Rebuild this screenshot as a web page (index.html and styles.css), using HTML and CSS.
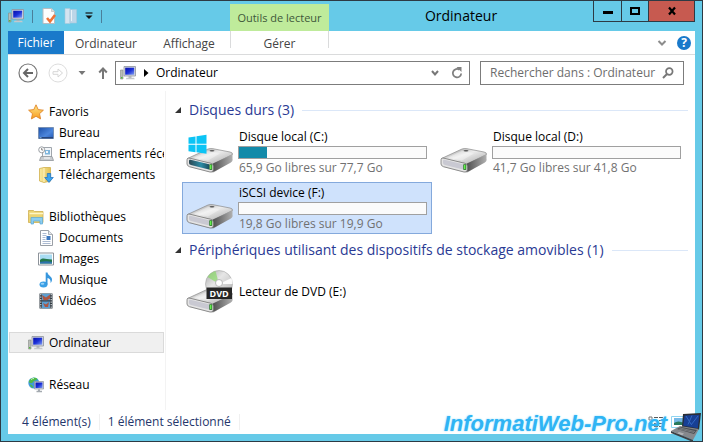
FILE: index.html
```html
<!DOCTYPE html>
<html lang="fr">
<head>
  <meta charset="UTF-8" />
  <meta name="viewport" content="width=device-width, initial-scale=1.0"/>
  <title>Ordinateur</title>
  <link rel="stylesheet" href="styles.css">
</head>
<body>

  <svg class="sprite" aria-hidden="true">
    <defs>
      <linearGradient id="screen" x1="0" y1="0" x2="1" y2="1">
        <stop offset="0" stop-color="#0a10a8"/>
        <stop offset="0.5" stop-color="#1a2fd8"/>
        <stop offset="1" stop-color="#7f9cf0"/>
      </linearGradient>
      <linearGradient id="desk" x1="0" y1="0" x2="1" y2="1">
        <stop offset="0" stop-color="#1c4fa8"/>
        <stop offset="0.6" stop-color="#4c86dc"/>
        <stop offset="1" stop-color="#2459b4"/>
      </linearGradient>
      <linearGradient id="gold" x1="0" y1="0" x2="0" y2="1">
        <stop offset="0" stop-color="#ffe88a"/>
        <stop offset="1" stop-color="#f79a1c"/>
      </linearGradient>
      <linearGradient id="folder" x1="0" y1="0" x2="1" y2="0">
        <stop offset="0" stop-color="#f9eaa0"/>
        <stop offset="1" stop-color="#e2c255"/>
      </linearGradient>
      <linearGradient id="diskTop" x1="0" y1="0" x2="1" y2="1">
        <stop offset="0" stop-color="#8a8a8a"/>
        <stop offset="0.45" stop-color="#ececec"/>
        <stop offset="1" stop-color="#a8a8a8"/>
      </linearGradient>
      <linearGradient id="diskSide" x1="0" y1="0" x2="1" y2="0">
        <stop offset="0" stop-color="#4c4c4c"/>
        <stop offset="1" stop-color="#b0b0b0"/>
      </linearGradient>
      <linearGradient id="teal" x1="0" y1="0" x2="1" y2="0">
        <stop offset="0" stop-color="#2c4752"/>
        <stop offset="0.6" stop-color="#2b8ca6"/>
        <stop offset="1" stop-color="#1d4f60"/>
      </linearGradient>
      <linearGradient id="disc" x1="0" y1="0" x2="1" y2="1">
        <stop offset="0" stop-color="#a8a8a8"/>
        <stop offset="0.4" stop-color="#e6e6e6"/>
        <stop offset="1" stop-color="#b0b0b0"/>
      </linearGradient>
    </defs>

    <symbol id="i-computer" viewBox="0 0 16 16">
      <path d="M0.5 5h2.500v9h-2.500z" fill="#b9bdb9" stroke="#858a85" stroke-width="0.600"/>
      <path d="M1 12h1.500v1.500H1z" fill="#55b83d"/>
      <path d="M4 1.500h11.500v9.500H4z" fill="#d6dae2" stroke="#8d929c" stroke-width="0.800"/>
      <path d="M5.200 2.700h9v7h-9z" fill="url(#screen)"/>
      <path d="M8.500 11.300h3v1.500h-3z" fill="#a4a8ac"/>
      <path d="M6.500 12.700h7.500l0.800 1.500H5.800z" fill="#c4c8cc"/>
    </symbol>

    <symbol id="i-star" viewBox="0 0 16 16">
      <path d="M8 0.800l2.200 4.800 5.200.6-3.900 3.500 1.100 5.200L8 12.300l-4.600 2.600 1.100-5.200L.6 6.200l5.200-.6z" fill="url(#gold)" stroke="#e0862a" stroke-width="0.900" stroke-linejoin="round"/>
    </symbol>

    <symbol id="i-desktop" viewBox="0 0 16 16">
      <path d="M.5 2.500h15v11H.5z" fill="url(#desk)" stroke="#7790b4"/>
      <path d="M1 12h14v1.500H1z" fill="#26457c"/>
      <path d="M1.500 12.300h2v.9h-2z" fill="#8fc6f2"/>
    </symbol>

    <symbol id="i-recent" viewBox="0 0 16 16">
      <path d="M4.500 1.500h9v10h-9z" fill="#f3f6f9" stroke="#a0a6ac"/>
      <path d="M7 4h5v4.500H7z" fill="#7fb6dd"/>
      <path d="M8 5h2v2H8z" fill="#f3f6f9"/>
      <path d="M3 10.500h11l1.500 4h-14z" fill="#c8ccd0" stroke="#90959a" stroke-width="0.800"/>
      <path d="M6 12h6" stroke="#fff"/>
      <circle cx="3.700" cy="3.800" r="3" fill="#fff" stroke="#9a9fa4"/>
      <path d="M3.700 2v2h1.500" fill="none" stroke="#666" stroke-width="0.800"/>
    </symbol>

    <symbol id="i-download" viewBox="0 0 16 16">
      <path d="M1.500 1.500L6 .5h6.500v13.500L6 15.500 1.500 14z" fill="url(#folder)" stroke="#d0b04c" stroke-width="0.800"/>
      <path d="M6 1v14" stroke="#fff6c8"/>
      <path d="M9.300 6.500h3.400v4h2.600L11 15.500 6.700 10.500h2.600z" fill="#3ba4ee" stroke="#1b6fc0" stroke-width="0.700"/>
    </symbol>

    <symbol id="i-library" viewBox="0 0 16 16">
      <path d="M.5 3.500v-2h5l1 1h8.500v11H.5z" fill="#ecd473" stroke="#cfae4e" stroke-width="0.800"/>
      <path d="M1.500 4.500h13.500" stroke="#fff5c4" stroke-width="1.500"/>
      <path d="M3 8.500h11.500V15h-2.500v-3H5.500v3H3z" fill="#8ccdf0" stroke="#5aa7d6" stroke-width="0.700"/>
    </symbol>

    <symbol id="i-document" viewBox="0 0 16 16">
      <path d="M2.500.5h8l4 4v11h-12z" fill="#fff" stroke="#9a9fa6"/>
      <path d="M10.500.5v4h4" fill="#e3e6ea" stroke="#9a9fa6" stroke-width="0.800"/>
      <path d="M4.500 3.500h4M4.500 5.500h4M4.500 7.500h3M4.500 9.500h3M4.500 11.500h8M4.500 13.500h8" stroke="#97aac6" stroke-width="0.800"/>
      <path d="M8.500 6h4v4h-4z" fill="#3c78c0"/>
    </symbol>

    <symbol id="i-image" viewBox="0 0 16 16">
      <path d="M.5 2h15v12H.5z" fill="#fff" stroke="#8d939a"/>
      <path d="M2 3.500h12v9H2z" fill="#a9dcf3"/>
      <path d="M2 9c3-3 5-1 12-.5v4H2z" fill="#24784c"/>
      <path d="M2 11c4-1 8-1 12 0v1.500H2z" fill="#2e72ae"/>
    </symbol>

    <symbol id="i-music" viewBox="0 0 16 16">
      <ellipse cx="5.500" cy="12.500" rx="4" ry="3" fill="#3ba0e6"/>
      <path d="M7.700.5h1.800c.2 3 5 4 4.500 7.500-.2 1.700-1 2.500-1.500 3 .6-3-1-4.500-3-5v6.500H7.700z" fill="#3797de"/>
      <ellipse cx="4.500" cy="11.700" rx="1.800" ry="1" fill="#9bd2f7"/>
    </symbol>

    <symbol id="i-video" viewBox="0 0 16 16">
      <path d="M1.500.5h13v15h-13z" fill="#333c44"/>
      <path d="M4 .800h8v6.500H4zM4 8.500h8v6.700H4z" fill="#5c9ed0"/>
      <path d="M4 2l4 2.500L12 1.500v4L9 7.200H5.500zM5 10l3 1.500 3-2.500-1 5H7z" fill="#ad5541"/>
      <path d="M2.800 1v14M13.200 1v14" stroke="#e6eaee" stroke-dasharray="1.300 1.200" stroke-width="1.100"/>
    </symbol>

    <symbol id="i-network" viewBox="0 0 16 16">
      <circle cx="5.800" cy="6" r="5.500" fill="#3f9ada"/>
      <path d="M2 2.500C4 .5 8 .2 9.500 2 8 4 6 3 5 5S1.500 6 .8 5zM2 7.500c2 0 3 1.500 3 3.500-2-.7-3-2-3-3.500z" fill="#4ebb45"/>
      <path d="M3 2.500c1-.8 2-1 3-1" stroke="#d2f3c0" fill="none"/>
      <path d="M6.500 4.500h9v7.500h-9z" fill="#d0d5e0" stroke="#8d929c" stroke-width="0.700"/>
      <path d="M7.500 5.500h7V11h-7z" fill="url(#screen)"/>
      <path d="M10 12.300h2v1.500h-2zM8.500 13.800h5.500v1.500H8.500z" fill="#a4aab0"/>
    </symbol>

    <symbol id="i-disk" viewBox="0 0 48 44">
      <path d="M3 37l24 6 20-13-3-2z" fill="#000" opacity="0.150"/>
      <path d="M1.500 28.500L22 19q2-.8 5-.3l17 3.300q3 .6 2.500 2.500L27 34z" fill="url(#diskTop)" stroke="#8a8a8a" stroke-width="0.700"/>
      <path d="M8 27.500L22 21l12 2.500-12 7z" fill="#fff" opacity="0.350"/>
      <path d="M27 33.500L46.500 24.500v5.500q0 1.500-2 2.700L28.500 41.500 26 42z" fill="url(#diskSide)"/>
      <path d="M1.500 28.500Q1 28.500 1 31v3q.2 2 2.500 2.700L24 42q3 .5 3.300-2v-4q0-2-2.500-2.700L4 28.200q-1.500-.3-2.500.3z" fill="#e4e4e4" stroke="#777" stroke-width="0.800"/>
      <path d="M3 30.500q0-1 1.500-.7L23 34.300v5.200L5 35q-2-.5-2-2z" fill="#c9c9d2"/>
      <path d="M23.300 34.300h2.900v5.500h-2.900z" fill="#176b17"/>
      <path d="M24 35h1.500v4H24z" fill="#66ef4f"/>
      <ellipse cx="26" cy="20.700" rx="2.500" ry="0.800" fill="#555"/>
    </symbol>

    <symbol id="i-windisk" viewBox="0 0 48 44">
      <use href="#i-disk"/>
      <path d="M3 30.500q0-1 1.500-.7L23 34.300v5.200L5 35q-2-.5-2-2z" fill="url(#teal)"/>
      <path d="M2.500 7.500L9.500 6.500v7.300h-7zM10.500 6.300L20.500 4.800v9h-10zM2.500 14.800h7v7.400l-7-1zM10.500 14.800h10v9l-10-1.500z" fill="#0cc4f5"/>
    </symbol>

    <symbol id="i-dvd" viewBox="0 0 48 44">
      <use href="#i-disk"/>
      <circle cx="33" cy="14" r="13.500" fill="url(#disc)" stroke="#a5a5a5" stroke-width="0.600"/>
      <path d="M33 14L21.500 7q3-4.500 8-6z" fill="#8ad86a" opacity="0.700"/>
      <path d="M33 14l12.500-6q1.200 3 1 6z" fill="#fff" opacity="0.900"/>
      <circle cx="33" cy="13" r="3.500" fill="#fff" stroke="#aaa" stroke-width="0.800"/>
      <path d="M20.500 17.500h25.500v11.500H20.500z" fill="#262626"/>
      <text x="33.200" y="26.500" text-anchor="middle" class="dvd-text">DVD</text>
    </symbol>
  </svg>

  <header class="titlebar">
    <div class="quick-access">
      <svg class="icon"><use href="#i-computer"/></svg>
      <span class="sep"></span>
      <button type="button" aria-label="Propriétés">
        <svg class="icon" viewBox="0 0 16 16">
          <path d="M2 .5h8.500l3 3v12H2z" fill="#fdfdfd" stroke="#b8bcc0"/>
          <path d="M10.500.5v3h3" fill="#ddd" stroke="#b8bcc0" stroke-width="0.700"/>
          <path d="M6 10l3 3.500L14 7" fill="none" stroke="#ee7337" stroke-width="2.600"/>
        </svg>
      </button>
      <button type="button" aria-label="Nouveau dossier">
        <svg class="icon" viewBox="0 0 16 16">
          <path d="M2 .5h5v15H2z" fill="#d4e4f0" stroke="#a9c7da" stroke-width="0.600"/>
          <path d="M7 1.500h6.500V15H7z" fill="#bdd6e8" stroke="#a9c7da" stroke-width="0.600"/>
          <path d="M8.500 2v11" stroke="#e8f2f8"/>
        </svg>
      </button>
      <button type="button" class="customize" aria-label="Personnaliser">
        <svg viewBox="0 0 8 8"><path d="M.5 1h7" stroke="#111" stroke-width="1.200"/><path d="M.5 3.500h7L4 7z" fill="#111"/></svg>
      </button>
      <span class="sep"></span>
    </div>
    <div class="tool-tab">Outils de lecteur</div>
    <h1>Ordinateur</h1>
    <div class="window-buttons">
      <button type="button" aria-label="Réduire"><svg viewBox="0 0 12 10"><path d="M1 6.500h10" stroke="#000" stroke-width="3"/></svg></button>
      <button type="button" aria-label="Agrandir"><svg viewBox="0 0 12 10"><path d="M2 2h8v6H2z" fill="none" stroke="#000" stroke-width="2"/></svg></button>
      <button type="button" class="close" aria-label="Fermer"><svg viewBox="0 0 12 10"><path d="M3 1.500l6 7M9 1.500l-6 7" stroke="#000" stroke-width="2.200"/></svg></button>
    </div>
  </header>

  <div class="window">
    <nav class="ribbon">
      <a href="#" class="file">Fichier</a>
      <a href="#" class="computer">Ordinateur</a>
      <a href="#" class="view">Affichage</a>
      <a href="#" class="manage">Gérer</a>
      <div class="ribbon-right">
        <button type="button" aria-label="Développer le ruban">
          <svg class="chevron" viewBox="0 0 10 8"><path d="M1.500 2L5 5.500 8.500 2" fill="none" stroke="#8c8c8c" stroke-width="2"/></svg>
        </button>
        <button type="button" class="help" aria-label="Aide">?</button>
      </div>
    </nav>

    <div class="toolbar">
      <button type="button" class="round" aria-label="Précédent">
        <svg viewBox="0 0 20 20"><circle cx="10" cy="10" r="9" fill="#fff" stroke="#777" stroke-width="1.200"/><path d="M15 10H6.500M10 6l-4 4 4 4" fill="none" stroke="#666" stroke-width="2"/></svg>
      </button>
      <button type="button" class="round" aria-label="Suivant">
        <svg viewBox="0 0 20 20"><circle cx="10" cy="10" r="9" fill="#fff" stroke="#ddd"/><path d="M5 8.700h5V6l4.500 4-4.500 4v-2.700H5z" fill="none" stroke="#d6d6d6"/></svg>
      </button>
      <button type="button" class="history" aria-label="Emplacements récents">
        <svg viewBox="0 0 8 6"><path d="M.5 1h7L4 5z" fill="#777"/></svg>
      </button>
      <button type="button" class="up" aria-label="Dossier parent">
        <svg viewBox="0 0 10 14"><path d="M5 13V2.500M1.200 6.500L5 2.500l3.800 4" fill="none" stroke="#777" stroke-width="2"/></svg>
      </button>
      <div class="address">
        <svg class="icon"><use href="#i-computer"/></svg>
        <svg class="crumb-arrow" viewBox="0 0 6 8"><path d="M1 0l4.500 4L1 8z" fill="#000"/></svg>
        <a href="#">Ordinateur</a>
        <button type="button" aria-label="Dérouler">
          <svg class="chevron" viewBox="0 0 10 8"><path d="M2 2L5 5.500 8 2" fill="none" stroke="#777" stroke-width="2"/></svg>
        </button>
        <button type="button" aria-label="Actualiser">
          <svg class="refresh" viewBox="0 0 12 12"><path d="M8.500 2.800A4.200 4.200 0 1 0 10.200 6.500" fill="none" stroke="#808080" stroke-width="1.800"/><path d="M5.500 0h5v5z" fill="#808080"/></svg>
        </button>
      </div>
      <div class="search">
        <input type="text" aria-label="Rechercher" placeholder="Rechercher dans : Ordinateur">
        <svg viewBox="0 0 12 12"><circle cx="7.300" cy="4.500" r="3.300" fill="none" stroke="#777" stroke-width="1.700"/><path d="M5 7l-4 4" stroke="#777" stroke-width="2"/></svg>
      </div>
    </div>

    <div class="content">
      <aside>
        <ul>
          <li class="root"><a href="#"><svg class="icon"><use href="#i-star"/></svg>Favoris</a></li>
          <li><a href="#"><svg class="icon"><use href="#i-desktop"/></svg>Bureau</a></li>
          <li><a href="#"><svg class="icon"><use href="#i-recent"/></svg>Emplacements récents</a></li>
          <li><a href="#"><svg class="icon"><use href="#i-download"/></svg>Téléchargements</a></li>
        </ul>
        <ul>
          <li class="root"><a href="#"><svg class="icon"><use href="#i-library"/></svg>Bibliothèques</a></li>
          <li><a href="#"><svg class="icon"><use href="#i-document"/></svg>Documents</a></li>
          <li><a href="#"><svg class="icon"><use href="#i-image"/></svg>Images</a></li>
          <li><a href="#"><svg class="icon"><use href="#i-music"/></svg>Musique</a></li>
          <li><a href="#"><svg class="icon"><use href="#i-video"/></svg>Vidéos</a></li>
        </ul>
        <ul>
          <li class="root current"><a href="#"><svg class="icon"><use href="#i-computer"/></svg>Ordinateur</a></li>
        </ul>
        <ul>
          <li class="root"><a href="#"><svg class="icon"><use href="#i-network"/></svg>Réseau</a></li>
        </ul>
      </aside>

      <main>
        <section>
          <h2>Disques durs (3)</h2>
          <div class="drives">
            <div class="drive">
              <svg class="drive-icon"><use href="#i-windisk"/></svg>
              <div class="info">
                <p class="name">Disque local (C:)</p>
                <div class="bar"><div class="used" style="width: 15%"></div></div>
                <p class="free">65,9 Go libres sur 77,7 Go</p>
              </div>
            </div>
            <div class="drive">
              <svg class="drive-icon"><use href="#i-disk"/></svg>
              <div class="info">
                <p class="name">Disque local (D:)</p>
                <div class="bar"></div>
                <p class="free">41,7 Go libres sur 41,8 Go</p>
              </div>
            </div>
            <div class="drive selected">
              <svg class="drive-icon"><use href="#i-disk"/></svg>
              <div class="info">
                <p class="name">iSCSI device (F:)</p>
                <div class="bar"></div>
                <p class="free">19,8 Go libres sur 19,9 Go</p>
              </div>
            </div>
          </div>
        </section>
        <section>
          <h2>Périphériques utilisant des dispositifs de stockage amovibles (1)</h2>
          <div class="drives">
            <div class="drive">
              <svg class="drive-icon"><use href="#i-dvd"/></svg>
              <div class="info">
                <p class="name">Lecteur de DVD (E:)</p>
              </div>
            </div>
          </div>
        </section>
      </main>
    </div>

    <footer>
      <span>4 élément(s)</span>
      <span>1 élément sélectionné</span>
      <div class="view-modes">
        <button type="button" aria-label="Détails">
          <svg viewBox="0 0 16 12"><path d="M1 1h3v3H1zM1 7h3v3H1z" fill="#fff" stroke="#777"/><path d="M6 1.500h4M11 1.500h4M6 4.500h4M11 4.500h4M6 7.500h4M11 7.500h4M6 10.500h4M11 10.500h4" stroke="#555"/></svg>
        </button>
        <button type="button" aria-label="Grandes icônes">
          <svg viewBox="0 0 16 12"><path d="M.5.5h15v11H.5z" fill="#fff" stroke="#8fd5f2"/><path d="M3 2h10v7H3z" fill="#76b9e6"/><path d="M3 7q4-3 10 0v2H3z" fill="#287a5c"/></svg>
        </button>
      </div>
    </footer>
  </div>

  <div class="brand">
    <span>InformatiWeb-Pro.net</span>
    <svg viewBox="0 0 32 32">
      <path d="M13 4l18-1-2 17-17-3z" fill="#2a2d33"/>
      <path d="M14.500 5.500l15-.8-1.700 13.600-14.600-2.600z" fill="#173f94"/>
      <path d="M16 6l5 8M22 5.500l-4 9M28 6l-7 9" stroke="#3268c4"/>
      <path d="M10 16l19 3-6 11L1 21z" fill="#85888c"/>
      <path d="M11 17l16 3-3 4-17-5z" fill="#4b4e52"/>
      <path d="M10 18l15 3.500M9 19l15 3.500" stroke="#9a9da1" stroke-width="0.600"/>
      <path d="M9 22l5 1.500-2 2-5-2z" fill="#b0b2b5"/>
      <path d="M1 21l22 9v2L1 23z" fill="#3d4044"/>
    </svg>
  </div>

</body>
</html>
```
FILE: styles.css
```css
* {
  margin: 0;
  padding: 0;
  box-sizing: border-box;
}

body {
  display: flex;
  flex-direction: column;
  min-height: 100vh;
  padding: 0 7px 7px;
  border: 1px solid #2d3a44;
  background-color: #66cae8;
  color: #000;
  font-family: 'Open Sans', 'Noto Sans', sans-serif;
  font-size: 12px;
  line-height: 16px;
}

button {
  display: flex;
  align-items: center;
  justify-content: center;
  border: none;
  background: none;
  font: inherit;
}

a {
  color: inherit;
  text-decoration: none;
}

ul {
  list-style: none;
}

.sprite {
  position: absolute;
  width: 0;
  height: 0;
}

.icon {
  width: 16px;
  height: 16px;
  flex: none;
}

.dvd-text {
  fill: #fff;
  font-size: 9px;
  font-weight: bold;
}

/* title bar */
.titlebar {
  display: flex;
  height: 30px;
}

.quick-access {
  display: flex;
  align-items: center;
  gap: 6px;
  width: 222px;
}

.sep {
  width: 1px;
  height: 13px;
  margin: 0 2px;
  background-color: #4a7f9a;
}

.customize svg {
  width: 8px;
  height: 8px;
}

.tool-tab {
  width: 99px;
  margin-top: 3px;
  background-color: #bfeb9b;
  color: #40583a;
  font-size: 11px;
  line-height: 28px;
  text-align: center;
}

.titlebar h1 {
  flex: 1;
  font-size: 14px;
  font-weight: normal;
  line-height: 30px;
  text-align: center;
}

.window-buttons {
  display: flex;
  height: 21px;
  border: 1px solid #2d3a44;
  border-top: none;
}

.window-buttons button {
  width: 27px;
}

.window-buttons button + button {
  border-left: 1px solid #2d3a44;
}

.window-buttons .close {
  width: 46px;
  background-color: #c75a50;
}

.window-buttons svg {
  width: 12px;
  height: 10px;
}

.window {
  display: flex;
  flex: 1;
  flex-direction: column;
  background-color: #fff;
}

/* ribbon */
.ribbon {
  display: flex;
  height: 24px;
  border-bottom: 1px solid #dadbdc;
  color: #444;
  line-height: 26px;
  text-align: center;
}

.ribbon .file {
  width: 56px;
  height: 23px;
  background-color: #1979ca;
  color: #fff;
  line-height: 24px;
}

.ribbon .computer {
  width: 84px;
}

.ribbon .view {
  width: 82px;
}

.ribbon .manage {
  width: 99px;
  height: 17px;
  border: 1px solid #dadbdc;
  border-width: 0 1px;
}

.ribbon-right {
  display: flex;
  align-items: center;
  gap: 10px;
  margin-left: auto;
  padding-right: 4px;
}

.chevron {
  width: 10px;
  height: 8px;
}

.help {
  width: 14px;
  height: 14px;
  border-radius: 50%;
  background-color: #1979ca;
  color: #fff;
  font-weight: bold;
}

/* navigation bar */
.toolbar {
  display: flex;
  align-items: center;
  height: 36px;
  padding: 0 11px 0 10px;
}

.round {
  margin-right: 10px;
}

.round svg {
  width: 20px;
  height: 20px;
}

.history svg {
  width: 8px;
  height: 6px;
}

.up {
  margin: 0 7px 0 12px;
}

.up svg {
  width: 10px;
  height: 14px;
}

.address,
.search {
  display: flex;
  align-items: center;
  height: 24px;
  border: 1px solid #7c7c7c;
}

.address {
  flex: 1;
  gap: 7px;
  padding: 0 6px 0 4px;
}

.address a {
  flex: 1;
}

.crumb-arrow {
  width: 6px;
  height: 8px;
}

.refresh {
  width: 12px;
  height: 12px;
  margin-left: 4px;
}

.search {
  width: 204px;
  margin-left: 10px;
  padding: 0 9px;
}

.search input {
  flex: 1;
  min-width: 0;
  border: none;
  outline: none;
  font: inherit;
}

.search input::placeholder {
  color: #6d6d6d;
}

.search svg {
  width: 12px;
  height: 12px;
}

.content {
  display: flex;
  flex: 1;
}

/* navigation pane */
aside {
  display: flex;
  flex-direction: column;
  gap: 21px;
  width: 158px;
  padding: 10px 1px 0;
  border-right: 1px solid #f3f3f3;
}

aside a {
  display: flex;
  align-items: center;
  gap: 5px;
  height: 21px;
  padding-left: 29px;
  overflow: hidden;
  white-space: nowrap;
}

aside .root a {
  padding-left: 19px;
}

aside .current a {
  padding-left: 18px;
  border: 1px solid #dadada;
  background-color: #f0f0f0;
}

/* drives */
main {
  flex: 1;
  min-width: 0;
  padding: 6px 7px 0 9px;
}

h2 {
  display: flex;
  align-items: center;
  gap: 8px;
  height: 26px;
  margin-bottom: 3px;
  color: #2a3a94;
  font-size: 14px;
  font-weight: normal;
  white-space: nowrap;
}

section + section h2 {
  margin-top: 3px;
}

h2::before {
  content: '';
  border: 3px solid transparent;
  border-right-color: #333;
  border-bottom-color: #333;
}

h2::after {
  content: '';
  flex: 1;
  height: 1px;
  background-color: #dbe7f8;
}

.drives {
  display: flex;
  flex-wrap: wrap;
  gap: 4px;
  margin-left: 7px;
}

.drive {
  display: flex;
  align-items: center;
  gap: 4px;
  width: 250px;
  height: 52px;
  padding: 0 4px 0 3px;
  border: 1px solid transparent;
}

.drive.selected {
  border-color: #84a9dc;
  background-color: #cfe2fc;
}

.drive-icon {
  width: 48px;
  height: 44px;
  flex: none;
}

.info {
  flex: 1;
}

.bar {
  height: 13px;
  margin: 1px 0;
  border: 1px solid #a0a0a0;
  background-color: #fbfbfb;
}

.used {
  height: 100%;
  background-color: #138aa9;
}

.name,
.free {
  padding-left: 1px;
}

.free {
  color: #717171;
}

/* status bar */
footer {
  display: flex;
  align-items: center;
  height: 24px;
  padding: 0 8px 0 14px;
  color: #24366b;
}

footer span {
  margin-right: 8px;
  padding-right: 8px;
  border-right: 1px solid #f0f0f0;
}

.view-modes {
  display: flex;
  gap: 7px;
  margin-left: auto;
}

.view-modes svg {
  width: 16px;
  height: 12px;
}

/* logo laid over the bottom right corner */
.brand {
  position: absolute;
  right: 1px;
  bottom: 0;
  display: flex;
  gap: 3px;
  color: #2fb4f4;
  font-family: 'Liberation Sans', sans-serif;
  font-size: 22px;
  font-style: italic;
  font-weight: bold;
  line-height: 28px;
  text-shadow: 0 0 2px #8fdcfb;
}

.brand svg {
  width: 32px;
  height: 32px;
}
```
